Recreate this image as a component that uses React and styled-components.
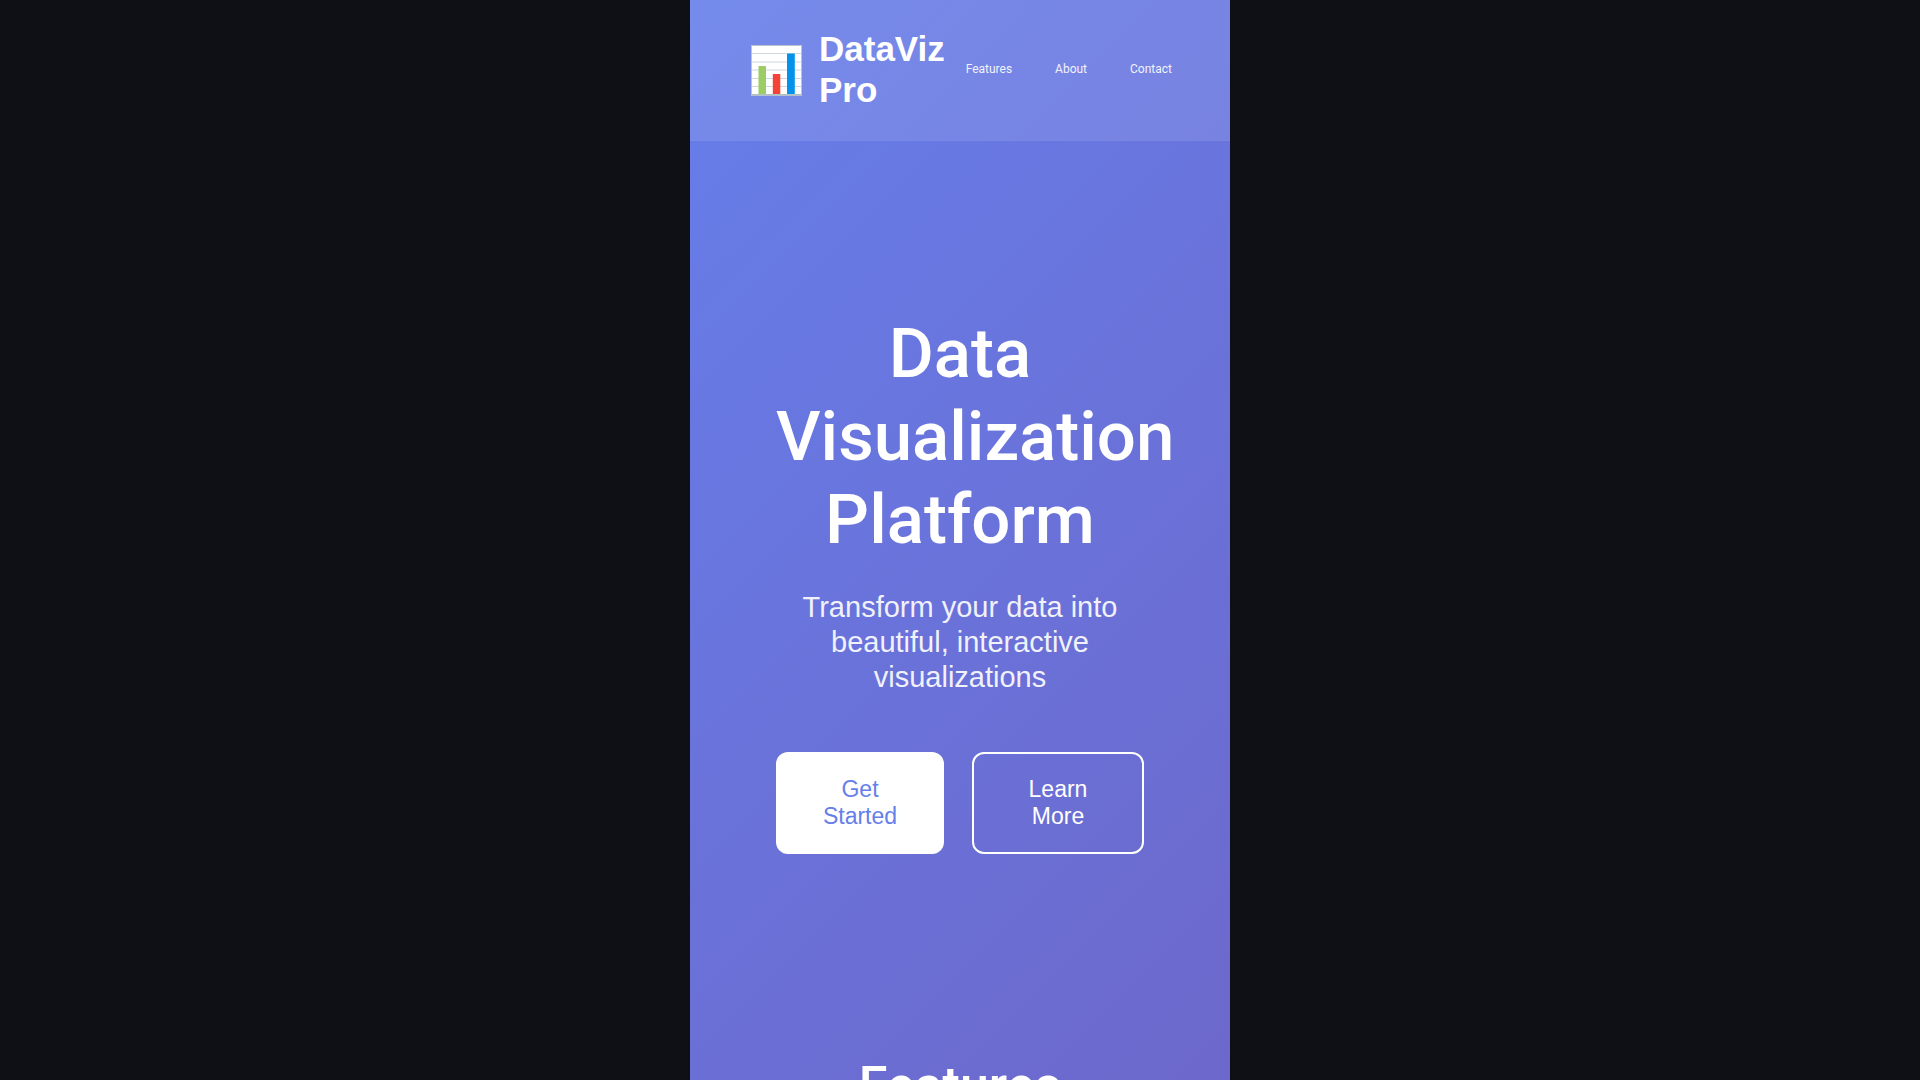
import React from "react";
import styled, { createGlobalStyle } from "styled-components";

const GlobalStyle = createGlobalStyle`
  *, *::before, *::after { box-sizing: border-box; }
  body {
    margin: 0;
    background: #0f1015;
    font-family: "Liberation Sans", Arial, sans-serif;
    color: #fff;
  }
`;

const Page = styled.div`
  width: 100%;
  max-width: 540px;
  height: 100vh;
  overflow: hidden;
  margin: 0 auto;
  background: linear-gradient(135deg, #667eea 0, #764ba2 2660px);
`;

const Header = styled.header`
  display: flex;
  align-items: center;
  justify-content: space-between;
  padding: 28px 58px 30px;
  background: rgba(255, 255, 255, 0.1);
  border-bottom: 1px solid rgba(255, 255, 255, 0.02);
`;

const Brand = styled.div`
  display: flex;
  align-items: center;
  gap: 14px;
  font-size: 35px;
  line-height: 41px;
  font-weight: 700;
`;

const Logo = styled.svg`
  flex: none;
  width: 57px;
  height: 59px;
`;

const Nav = styled.nav`
  display: flex;
  gap: 43px;
`;

const NavLink = styled.a`
  font-family: Roboto, sans-serif;
  font-size: 12px;
  line-height: 16px;
  color: #fff;
  opacity: 0.9;
  text-decoration: none;
`;

const Hero = styled.section`
  padding: 171px 86px;
  text-align: center;
`;

const Title = styled.h1`
  margin: 0 0 29px;
  font-family: Roboto, sans-serif;
  font-size: 69px;
  line-height: 83px;
  font-weight: 500;
`;

const Lead = styled.p`
  margin: 0 0 57px;
  font-size: 29px;
  line-height: 35px;
  opacity: 0.9;
`;

const Actions = styled.div`
  display: flex;
  gap: 28px;
`;

const Button = styled.button`
  flex: 1;
  padding: 22px 46px;
  border: ${(p) => (p.$outline ? "2px solid #fff" : "0")};
  border-radius: 12px;
  background: ${(p) => (p.$outline ? "transparent" : "#fff")};
  color: ${(p) => (p.$outline ? "#fff" : "#667eea")};
  font-family: inherit;
  font-size: 23px;
  line-height: 27px;
  cursor: pointer;
`;

const Features = styled.section`
  padding: 30px 58px;
  text-align: center;
`;

const SectionTitle = styled.h2`
  margin: 0;
  font-family: Roboto, sans-serif;
  font-size: 52px;
  line-height: 62px;
  font-weight: 500;
`;

export default function App() {
  return (
    <>
      <GlobalStyle />
      <Page>
        <Header>
          <Brand>
            <Logo viewBox="0 0 57 59" aria-hidden="true">
              <rect x="3.5" y="5.5" width="50" height="50" fill="#fff" stroke="#b8c5d1" />
              <path d="M4 13.5H53M4 22H53M4 30H53M4 38.5H53M4 46.5H53" stroke="#cfd8dc" strokeWidth="1.2" />
              <path d="M3 54.7H54" stroke="#b0bec5" strokeWidth="1.6" />
              <rect x="10.5" y="26" width="7.5" height="28" rx="0.6" fill="#9ccc65" />
              <rect x="24.8" y="34" width="7.5" height="20" rx="0.6" fill="#f44336" />
              <rect x="39" y="13.5" width="7.8" height="40.5" rx="0.6" fill="#0493ec" />
            </Logo>
            <span>DataViz Pro</span>
          </Brand>
          <Nav>
            <NavLink href="#features">Features</NavLink>
            <NavLink href="#about">About</NavLink>
            <NavLink href="#contact">Contact</NavLink>
          </Nav>
        </Header>
        <Hero>
          <Title>Data Visualization Platform</Title>
          <Lead>Transform your data into beautiful, interactive visualizations</Lead>
          <Actions>
            <Button>Get Started</Button>
            <Button $outline>Learn More</Button>
          </Actions>
        </Hero>
        <Features id="features">
          <SectionTitle>Features</SectionTitle>
        </Features>
      </Page>
    </>
  );
}
